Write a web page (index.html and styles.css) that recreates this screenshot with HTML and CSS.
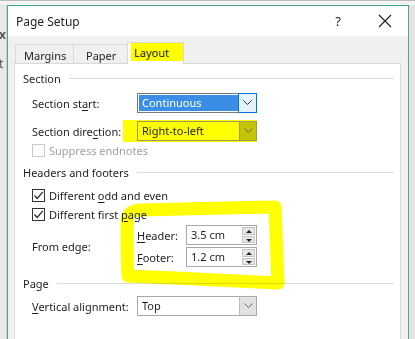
FILE: index.html
```html
<!DOCTYPE html>
<html lang="en">
  <head>
    <meta charset="UTF-8" />
    <title>Page Setup</title>
    <link rel="stylesheet" href="styles.css">
  </head>
  <body>
    <div class="app">
      <div class="app-left">
        <span class="ghost g1">x</span>
        <span class="ghost g2">t</span>
      </div>
      <div class="dialog">
        <div class="titlebar">
          <span class="title">Page Setup</span>
          <span class="help">?</span>
          <svg class="close" width="14" height="14" viewBox="0 0 14 14">
            <path d="M1 1 L13 13 M13 1 L1 13" stroke="#222" stroke-width="1.2" fill="none" />
          </svg>
        </div>

        <div class="dialog-body">
          <div class="tabs">
            <div class="tab tab-margins">Margins</div>
            <div class="tab tab-paper">Paper</div>
            <div class="tab active"><span class="mark">Layout</span></div>
          </div>

          <div class="panel">
            <!-- section -->
            <div class="group-title"><span>Section</span></div>
            <div class="row">
              <label>Section st<u>a</u>rt:</label>
              <div class="select focused">
                <span class="value">Continuous</span>
                <span class="drop">
                  <svg width="9" height="6" viewBox="0 0 9 6"><path d="M0.5 0.5 L4.5 4.5 L8.5 0.5" stroke="#333" fill="none" /></svg>
                </span>
              </div>
            </div>
            <div class="row marked-row">
              <label>Section dire<u>c</u>tion:</label>
              <div class="select marked">
                <span class="value">Right-to-left</span>
                <span class="drop">
                  <svg width="9" height="6" viewBox="0 0 9 6"><path d="M0.5 0.5 L4.5 4.5 L8.5 0.5" stroke="#666" fill="none" /></svg>
                </span>
              </div>
            </div>
            <div class="check disabled">
              <span class="box"></span>
              <span>Suppress endnotes</span>
            </div>

            <!-- headers and footers -->
            <div class="group-title"><span>Headers and footers</span></div>
            <div class="check">
              <span class="box">
                <svg width="11" height="11" viewBox="0 0 11 11"><path d="M1.5 5.5 L4.2 8.5 L9.8 1.8" stroke="#222" stroke-width="1.2" fill="none" /></svg>
              </span>
              <span>Different <u>o</u>dd and even</span>
            </div>
            <div class="check">
              <span class="box">
                <svg width="11" height="11" viewBox="0 0 11 11"><path d="M1.5 5.5 L4.2 8.5 L9.8 1.8" stroke="#222" stroke-width="1.2" fill="none" /></svg>
              </span>
              <span>Different first <u>p</u>age</span>
            </div>
            <div class="edge">
              <label>From edge:</label>
              <div class="spins">
                <div class="spin-row">
                  <label><u>H</u>eader:</label>
                  <div class="spin">
                    <span class="value">3.5 cm</span>
                    <span class="arrows">
                      <span class="up"></span>
                      <span class="down"></span>
                    </span>
                  </div>
                </div>
                <div class="spin-row">
                  <label><u>F</u>ooter:</label>
                  <div class="spin">
                    <span class="value">1.2 cm</span>
                    <span class="arrows">
                      <span class="up"></span>
                      <span class="down"></span>
                    </span>
                  </div>
                </div>
              </div>
            </div>

            <!-- page -->
            <div class="group-title page-title"><span>Page</span></div>
            <div class="row">
              <label><u>V</u>ertical alignment:</label>
              <div class="select">
                <span class="value">Top</span>
                <span class="drop">
                  <svg width="9" height="6" viewBox="0 0 9 6"><path d="M0.5 0.5 L4.5 4.5 L8.5 0.5" stroke="#666" fill="none" /></svg>
                </span>
              </div>
            </div>

            <!-- hand drawn highlighter loop -->
            <svg class="scribble" width="180" height="100" viewBox="0 0 180 100">
              <path d="M9 28 C 9 18, 12 15, 22 14 C 60 13, 110 12, 157 11 C 158 40, 159 65, 160 87 C 120 85, 60 82, 10 80 C 9 62, 9 44, 9 26"
                stroke="#ffff00" stroke-width="13" fill="none" stroke-linecap="round" stroke-linejoin="round" />
            </svg>
          </div>
        </div>
      </div>
    </div>
  </body>
</html>
```

FILE: styles.css
```css
body {
  margin: 0;
  background: #e4e4e4;
  font-family: "Noto Sans", "Open Sans", sans-serif;
  font-size: 11px;
  color: #1e1e1e;
  overflow: hidden;
}

u {
  text-decoration-thickness: 1px;
  text-underline-offset: 2px;
}

label {
  white-space: nowrap;
  flex-shrink: 0;
}

.app {
  display: flex;
  height: 339px;
  padding-top: 4px;
  box-sizing: border-box;
  border-top: 1px solid #bdbdbd;
  background: linear-gradient(#f3f3f3 0, #f3f3f3 4px, #e4e4e4 4px);
}

.app-left {
  width: 6px;
  position: relative;
  background: #e9e9e9;
  border-right: 1px solid #d0d0d0;
}

.ghost {
  position: absolute;
  left: -1px;
  color: #555;
  font-size: 12px;
}

.g1 { top: 21px; font-weight: bold; }
.g2 { top: 50px; }

.dialog {
  width: 400px;
  border: 1px solid #3fb07c;
  border-bottom: none;
  background: #f0f0f0;
}

.titlebar {
  height: 30px;
  background: #fff;
  display: flex;
  align-items: center;
  padding-left: 8px;
  padding-right: 16px;
}

.title {
  font-size: 12px;
  flex: 1;
}

.help {
  font-size: 13px;
  margin-right: 37px;
}

.dialog-body {
  padding: 6px 7px 0 6px;
}

.tabs {
  display: flex;
  align-items: flex-end;
  height: 22px;
  padding-left: 1px;
}

.tab {
  height: 20px;
  box-sizing: border-box;
  line-height: 21px;
  border: 1px solid #d9d9d9;
  border-bottom: none;
  margin-right: -1px;
  color: #222;
  white-space: nowrap;
}

.tab-margins {
  width: 59px;
  padding-left: 8px;
}

.tab-paper {
  width: 55px;
  padding-left: 12px;
}

.tab.active {
  width: 57px;
  height: 22px;
  line-height: 22px;
  background: #fff;
  padding: 0 0 0 3px;
  position: relative;
  z-index: 1;
}

.mark {
  display: block;
  background: #ffff00;
  padding-left: 3px;
  height: 18px;
  line-height: 19px;
}

.panel {
  position: relative;
  background: #fff;
  border: 1px solid #d9d9d9;
  height: 280px;
  padding: 7px 6px 0 8px;
  margin-top: -1px;
}

.group-title {
  display: flex;
  align-items: center;
  height: 14px;
  margin-bottom: 8px;
}

.group-title::after {
  content: "";
  flex: 1;
  height: 1px;
  background: #dcdcdc;
  margin-left: 8px;
}

.page-title {
  margin-bottom: 6px;
}

.row {
  display: flex;
  align-items: center;
  height: 20px;
  margin: 0 0 7px 9px;
}

.row label {
  width: 105px;
}

.marked-row {
  height: 22px;
  margin-bottom: 0;
  background: linear-gradient(to right, transparent 91px, #ffff00 91px, #ffff00 225px, transparent 225px);
}

.select {
  width: 120px;
  height: 20px;
  box-sizing: border-box;
  border: 1px solid #a8a8a8;
  display: flex;
  background: #fff;
}

.select .value {
  flex: 1;
  padding-left: 4px;
  line-height: 18px;
}

.select .drop {
  width: 16px;
  background: #e1e1e1;
  border-left: 1px solid #bcbcbc;
  display: flex;
  align-items: center;
  justify-content: center;
}

.select.focused {
  border-color: #7a7a7a;
}

.select.focused .value {
  background: #3a8ee6;
  color: #fff;
  margin: 1px 0 1px 1px;
  padding-left: 3px;
  line-height: 16px;
}

.select.focused .drop {
  background: #e5f1fb;
  border: 1px solid #0078d7;
  margin: -1px -1px -1px 0;
  width: 17px;
}

.select.marked {
  background: #ffff00;
  border-color: #9a9a60;
}

.select.marked .drop {
  background: #c4c400;
  border-left-color: #a0a040;
}

.check {
  display: flex;
  align-items: center;
  height: 16px;
  margin: 0 0 3px 9px;
  gap: 4px;
  white-space: nowrap;
}

.check .box {
  width: 13px;
  height: 13px;
  box-sizing: border-box;
  border: 1px solid #333;
  display: flex;
  align-items: center;
  justify-content: center;
  flex-shrink: 0;
}

.check.disabled {
  color: #a0a0a0;
  margin-bottom: 7px;
}

.check.disabled .box {
  border-color: #c8c8c8;
}

.edge {
  display: flex;
  align-items: center;
  margin: 3px 0 9px 9px;
}

.edge > label {
  width: 105px;
}

.spins {
  display: flex;
  flex-direction: column;
  gap: 2px;
}

.spin-row {
  display: flex;
  align-items: center;
}

.spin-row label {
  width: 49px;
  position: relative;
  z-index: 1;
}

.spin {
  width: 71px;
  height: 20px;
  box-sizing: border-box;
  border: 1px solid #a8a8a8;
  display: flex;
  background: #fff;
}

.spin .value {
  flex: 1;
  padding-left: 4px;
  line-height: 18px;
}

.arrows {
  width: 13px;
  margin: 1px 1px 1px 0;
  display: flex;
  flex-direction: column;
  gap: 1px;
}

.arrows span {
  flex: 1;
  background: #e6e6e6;
  border: 1px solid #c4c4c4;
  position: relative;
}

.arrows .up::after,
.arrows .down::after {
  content: "";
  position: absolute;
  left: 3px;
  border-left: 3px solid transparent;
  border-right: 3px solid transparent;
}

.arrows .up::after {
  top: 2px;
  border-bottom: 3px solid #222;
}

.arrows .down::after {
  top: 2px;
  border-top: 3px solid #222;
}

.scribble {
  position: absolute;
  left: 103px;
  top: 132px;
  pointer-events: none;
  mix-blend-mode: multiply;
}
```
